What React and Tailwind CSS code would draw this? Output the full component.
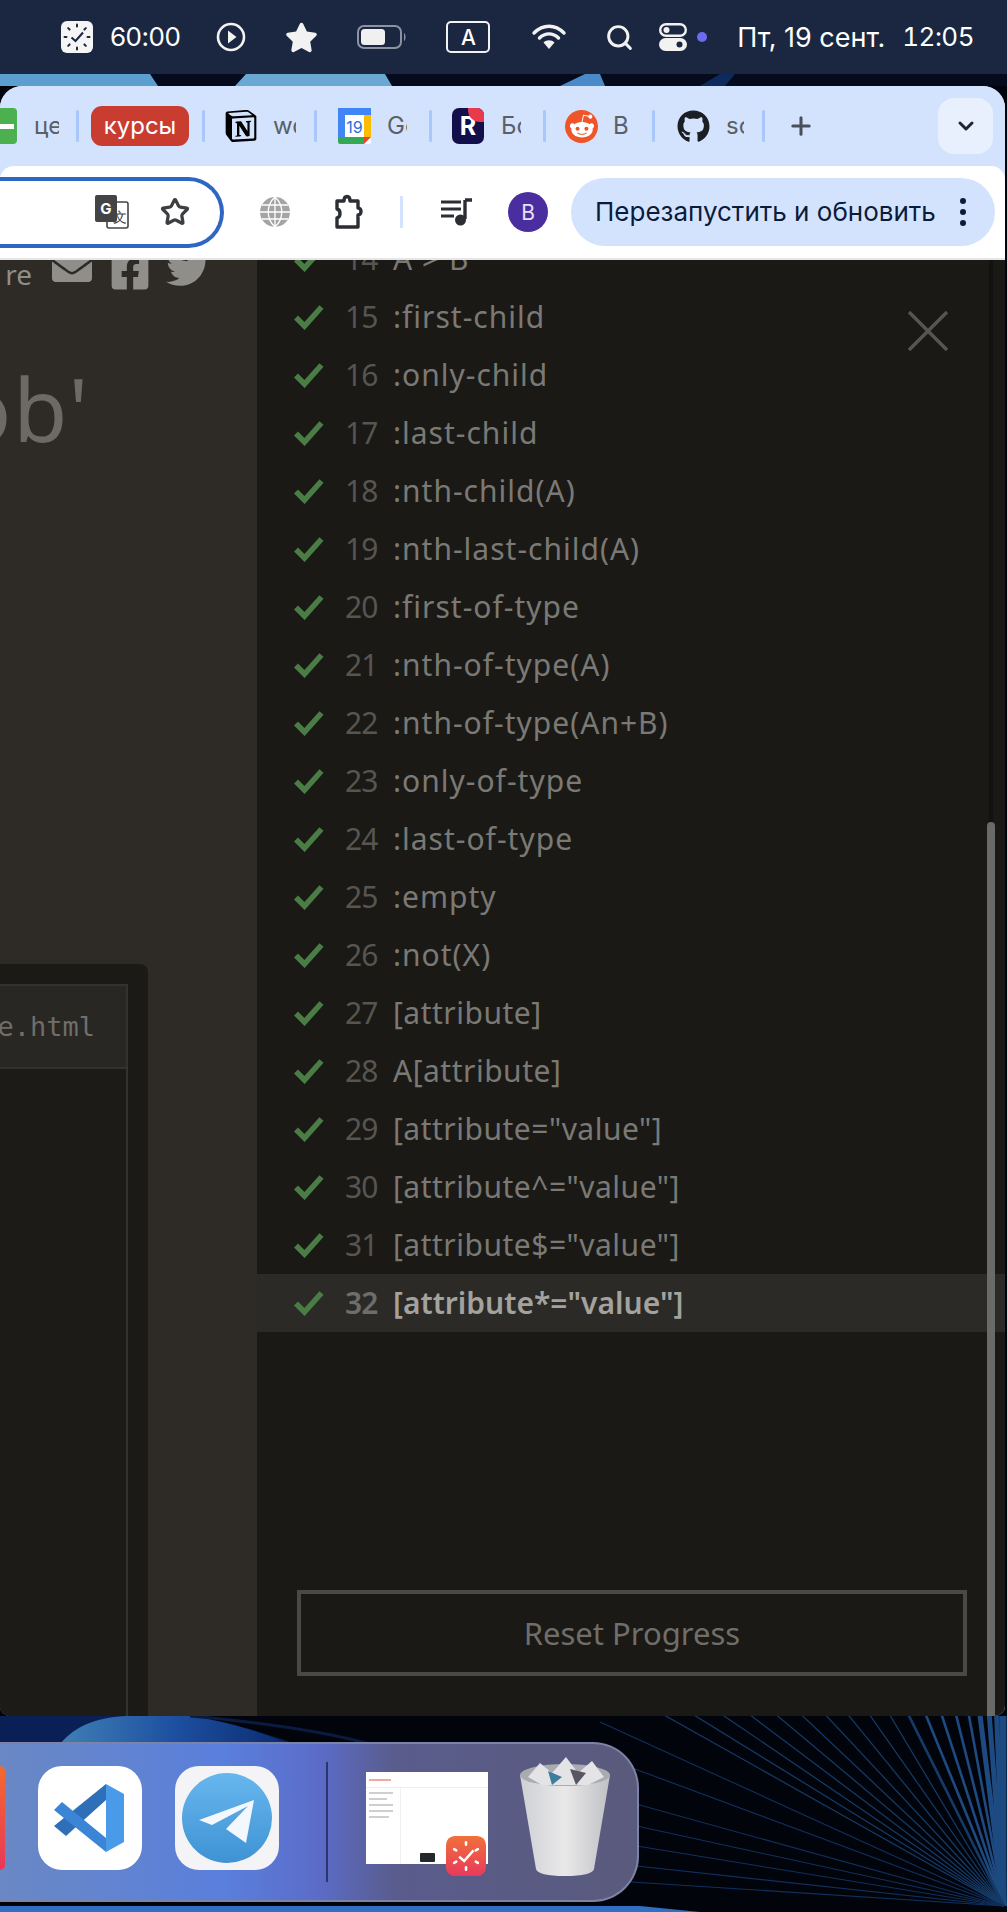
import React from 'react';
import { FaGithub, FaRedditAlien, FaTwitter, FaFacebookSquare, FaEnvelope, FaStar } from 'react-icons/fa';
import { SiNotion } from 'react-icons/si';
import { Plus, ChevronDown, Star, Search } from 'lucide-react';

const levels = [
  [14, 'A > B'],
  [15, ':first-child'],
  [16, ':only-child'],
  [17, ':last-child'],
  [18, ':nth-child(A)'],
  [19, ':nth-last-child(A)'],
  [20, ':first-of-type'],
  [21, ':nth-of-type(A)'],
  [22, ':nth-of-type(An+B)'],
  [23, ':only-of-type'],
  [24, ':last-of-type'],
  [25, ':empty'],
  [26, ':not(X)'],
  [27, '[attribute]'],
  [28, 'A[attribute]'],
  [29, '[attribute="value"]'],
  [30, '[attribute^="value"]'],
  [31, '[attribute$="value"]'],
  [32, '[attribute*="value"]'],
];

const Sep = () => <div className="w-[3px] h-[32px] rounded-full bg-[#a8c7fa] shrink-0" />;

const Check = () => (
  <svg width="30" height="26" viewBox="0 0 30 26" className="shrink-0">
    <path d="M2 13.5 L10.5 22 L27.5 3" fill="none" stroke="#4a7d45" strokeWidth="5.6" />
  </svg>
);

const LevelRow = ({ num, name, active }) => {
  const tracking = active ? 'tracking-[0px]' : name.includes('[') ? 'tracking-[0.5px]' : 'tracking-[1px]';
  return (
    <div className={`flex items-center h-[58px] pl-[37px] ${active ? 'bg-[#2b2a27]' : ''}`}>
      <Check />
      <span className={`w-[48px] ml-[21px] text-[30px] leading-none tracking-[-1px] ${active ? 'font-semibold text-[#6e6d69]' : 'text-[#565552]'}`}>{num}</span>
      <span className={`text-[30px] leading-none ${tracking} ${active ? 'font-semibold text-[#a3a29e]' : 'text-[#7a7975]'}`}>{name}</span>
    </div>
  );
};

const ClockApp = ({ size }) => (
  <svg width={size} height={size} viewBox="0 0 32 32">
    <defs>
      <linearGradient id="clockapp" x1="0" y1="0" x2="0" y2="1">
        <stop offset="0" stopColor="#f0703a" />
        <stop offset="1" stopColor="#e83a5c" />
      </linearGradient>
    </defs>
    <rect width="32" height="32" rx="7" fill="url(#clockapp)" />
    {[0, 60, 120, 180, 240, 300].map((a) => (
      <rect key={a} x="15" y="4" width="2" height="4" rx="1" fill="#fff" transform={`rotate(${a} 16 16)`} />
    ))}
    <path d="M10.5 16.5 L14.5 20 L22 11.5" fill="none" stroke="#fff" strokeWidth="2" />
  </svg>
);

const MenuBar = () => (
  <div className="h-[74px] bg-[#1b2740] text-white relative shrink-0 font-['Inter',sans-serif]">
    <div className="flex items-center h-full pl-[61px]">
      <svg width="32" height="32" viewBox="0 0 32 32">
        <rect width="32" height="32" rx="6" fill="#f5f5f5" />
        {[0, 45, 90, 135, 180, 225, 270, 315].map((a) => (
          <rect key={a} x="15" y="2.5" width="2" height="4" rx="1" fill="#1b2740" transform={`rotate(${a} 16 16)`} />
        ))}
        <path d="M10.5 16.5 L14.5 20 L22 11.5" fill="none" stroke="#1b2740" strokeWidth="2" />
      </svg>
      <span className="ml-[17px] text-[26px] tracking-[-0.5px] leading-none">60:00</span>
      <svg width="30" height="30" viewBox="0 0 30 30" className="ml-[36px]">
        <circle cx="15" cy="15" r="13" fill="none" stroke="#f2f2f2" strokeWidth="2.6" />
        <path d="M12 8.5 L20.5 15 L12 21.5 Z" fill="#f2f2f2" />
      </svg>
      <FaStar size={33} className="ml-[39px] text-[#f2f2f2]" />
      <svg width="50" height="24" viewBox="0 0 50 24" className="ml-[39px]">
        <rect x="1" y="1" width="43" height="22" rx="6" fill="none" stroke="#8b93a3" strokeWidth="2" />
        <rect x="4" y="4" width="24" height="16" rx="3.5" fill="#f0f0f0" />
        <path d="M47 8 C49 9 49 15 47 16 Z" fill="#8b93a3" />
      </svg>
      <div className="ml-[39px] w-[44px] h-[32px] rounded-[5px] border-2 border-[#f2f2f2] flex items-center justify-center text-[21px] font-medium leading-none">A</div>
      <svg width="36" height="26" viewBox="0 0 36 26" className="ml-[41px]">
        <path d="M3 9 C12 0 24 0 33 9 M8.5 14 C14 8.5 22 8.5 27.5 14" fill="none" stroke="#f2f2f2" strokeWidth="3.4" strokeLinecap="round" />
        <path d="M12.5 18.5 C15.5 15.5 20.5 15.5 23.5 18.5 L18 25 Z" fill="#f2f2f2" />
      </svg>
      <Search size={29} strokeWidth={2.4} className="ml-[38px] text-[#f2f2f2]" />
      <svg width="28" height="28" viewBox="0 0 28 28" className="ml-[25px]">
        <rect x="1.2" y="1.2" width="25.6" height="11.6" rx="5.8" fill="none" stroke="#f2f2f2" strokeWidth="2.4" />
        <circle cx="7.5" cy="7" r="3" fill="#f2f2f2" />
        <rect y="15" width="28" height="13" rx="6.5" fill="#f2f2f2" />
        <circle cx="20.5" cy="21.5" r="3" fill="#1b2740" />
      </svg>
      <div className="ml-[10px] w-[10px] h-[10px] rounded-full bg-[#6c6cf0]" />
      <span className="ml-[30px] text-[27px] leading-none whitespace-nowrap">Пт, 19 сент.</span>
      <span className="ml-[17px] text-[26px] tracking-[-0.5px] leading-none tabular-nums">12:05</span>
    </div>
  </div>
);

const WallStrip = () => (
  <div className="h-[12px] bg-[#050a1c] shrink-0">
    <svg width="1007" height="12" viewBox="0 0 1007 12" className="block">
      <path d="M0 12 L0 0 L150 0 L158 12 Z" fill="#5c9ed0" />
      <path d="M235 12 L246 0 L385 0 L392 12 Z" fill="#6aa8d4" />
      <path d="M560 12 L585 0 L600 0 L605 12 Z" fill="#4b8ac8" />
      <path d="M700 12 L720 0 L735 0 L725 12 Z" fill="#0e2a5c" />
    </svg>
  </div>
);

const TabStrip = () => (
  <div className="h-[80px] bg-[#d3e3fd] flex items-center shrink-0 pr-[12px] font-['Inter',sans-serif]">
    <div className="w-[17px] h-[36px] bg-[#4caf50] rounded-r-[4px] flex items-center shrink-0">
      <div className="w-[14px] h-[5px] bg-white" />
    </div>
    <span className="ml-[17px] w-[25px] overflow-hidden text-[24px] leading-none text-[#5a6068] whitespace-nowrap">це</span>
    <div className="ml-[17px]"><Sep /></div>
    <div className="ml-[12px] w-[98px] h-[40px] rounded-[11px] bg-[#c93d30] text-white text-[24px] leading-none flex items-center justify-center">курсы</div>
    <div className="ml-[13px]"><Sep /></div>
    <div className="ml-[20px] w-[32px] h-[36px] flex items-center justify-center text-black"><SiNotion size={32} /></div>
    <span className="ml-[16px] w-[23px] overflow-hidden text-[24px] leading-none text-[#5a6068]">wo</span>
    <div className="ml-[18px]"><Sep /></div>
    <svg width="33" height="36" viewBox="0 0 33 36" className="ml-[21px]">
      <rect width="33" height="36" rx="2" fill="#fff" />
      <path d="M0 0 H33 V7 H0 Z" fill="#4285f4" />
      <path d="M0 0 H7 V29 H0 Z" fill="#4285f4" />
      <path d="M26 7 H33 V29 H26 Z" fill="#fbbc04" />
      <path d="M0 29 H26 V36 H2 Q0 36 0 34 Z" fill="#34a853" />
      <path d="M26 29 H33 L26 36 Z" fill="#ea4335" />
      <text x="16.5" y="25" textAnchor="middle" fontSize="16" fontFamily="Inter, sans-serif" fill="#2a6fdb">19</text>
    </svg>
    <span className="ml-[16px] w-[20px] overflow-hidden text-[24px] leading-none text-[#5a6068]">Go</span>
    <div className="ml-[22px]"><Sep /></div>
    <div className="ml-[20px] w-[32px] h-[36px] rounded-[7px] bg-[#120f4a] relative overflow-hidden flex items-center justify-center text-white font-bold text-[25px] leading-none shrink-0">
      R
      <div className="absolute top-0 right-0 w-[16px] h-[14px] bg-[#e8394d] rounded-bl-[12px]" />
    </div>
    <span className="ml-[17px] w-[20px] overflow-hidden text-[24px] leading-none text-[#5a6068]">Бо</span>
    <div className="ml-[22px]"><Sep /></div>
    <div className="ml-[19px] w-[33px] h-[33px] rounded-full bg-[#f0552a] flex items-center justify-center text-white shrink-0"><FaRedditAlien size={26} /></div>
    <span className="ml-[15px] w-[15px] text-[24px] leading-none text-[#5a6068]">В</span>
    <div className="ml-[24px]"><Sep /></div>
    <FaGithub size={33} className="ml-[22px] text-[#1b1f23] shrink-0" />
    <span className="ml-[16px] w-[18px] overflow-hidden text-[24px] leading-none text-[#5a6068]">so</span>
    <div className="ml-[18px]"><Sep /></div>
    <Plus size={28} strokeWidth={2.6} className="ml-[22px] text-[#4a5058]" />
    <div className="ml-auto w-[55px] h-[56px] rounded-[16px] bg-[#e9f0fd] flex items-center justify-center">
      <ChevronDown size={24} strokeWidth={3} className="text-[#1f2430]" />
    </div>
  </div>
);

const Toolbar = () => (
  <div className="h-[94px] bg-white flex items-center shrink-0 rounded-t-[14px] border-b-2 border-[#e6e6e6] pr-[11px] font-['Inter',sans-serif]">
    <div className="w-[224px] h-[71px] border-[4px] border-l-0 border-[#2f66c4] rounded-r-[36px] flex items-center justify-end pr-[30px] shrink-0">
      <svg width="34" height="34" viewBox="0 0 34 34">
        <rect x="12" y="7" width="21" height="26" rx="2" fill="#fff" stroke="#444" strokeWidth="1.6" />
        <rect x="0" y="0" width="22" height="27" rx="2" fill="#444" />
        <text x="11" y="19" textAnchor="middle" fontSize="15" fontWeight="700" fontFamily="Inter, sans-serif" fill="#fff">G</text>
        <text x="25" y="27" textAnchor="middle" fontSize="14" fontFamily="Inter, sans-serif" fill="#444">文</text>
      </svg>
      <Star size={30} strokeWidth={2.6} className="ml-[31px] text-[#3c4043]" />
    </div>
    <svg width="32" height="32" viewBox="0 0 32 32" className="ml-[35px] shrink-0">
      <circle cx="16" cy="16" r="15" fill="#a4a4a4" />
      <path d="M1 16 H31 M3 9 H29 M3 23 H29 M16 1 V31 M16 1 C7 9 7 23 16 31 M16 1 C25 9 25 23 16 31" fill="none" stroke="#fff" strokeWidth="1.3" />
    </svg>
    <svg width="34" height="36" viewBox="0 0 34 36" className="ml-[41px] shrink-0">
      <path d="M5 7 H12 C12 1 18 1 18 7 H26 V14 C30 14 30 21 26 21 V33 H5 V24 C9 23 9 16 5 15 Z" fill="none" stroke="#2b2e33" strokeWidth="3.4" strokeLinejoin="round" />
    </svg>
    <div className="ml-[34px] w-[3px] h-[32px] bg-[#d3e3fd] shrink-0" />
    <svg width="32" height="30" viewBox="0 0 32 30" className="ml-[38px] shrink-0">
      <path d="M0 5 H20 M0 12 H20 M0 19 H13" stroke="#2b2e33" strokeWidth="3" />
      <path d="M24 3 V22" stroke="#2b2e33" strokeWidth="3.4" />
      <path d="M24 3 H31" stroke="#2b2e33" strokeWidth="3.4" />
      <circle cx="19.5" cy="23" r="5.5" fill="#2b2e33" />
    </svg>
    <div className="ml-[35px] w-[40px] h-[40px] rounded-full bg-[#4a2ea0] text-[#e6e0f8] text-[21px] leading-none flex items-center justify-center shrink-0">В</div>
    <div className="ml-[23px] w-[424px] h-[68px] rounded-[34px] bg-[#d3e3fd] flex items-center pl-[24px] pr-[29px] text-[#0b1b3a] shrink-0">
      <span className="text-[26px] leading-none whitespace-nowrap">Перезапустить и обновить</span>
      <div className="ml-auto flex flex-col gap-[5px]">
        <div className="w-[6px] h-[6px] rounded-full bg-[#0b1b3a]" />
        <div className="w-[6px] h-[6px] rounded-full bg-[#0b1b3a]" />
        <div className="w-[6px] h-[6px] rounded-full bg-[#0b1b3a]" />
      </div>
    </div>
  </div>
);

const LeftPane = () => (
  <div className="w-[257px] bg-[#2e2b26] flex flex-col shrink-0 overflow-hidden">
    <div className="flex items-start h-[32px] overflow-hidden">
      <span className="ml-[-24px] mt-[-4px] w-[56px] text-right text-[28px] leading-[36px] text-[#8f8e8a] font-['Noto_Sans',sans-serif]">re</span>
      <FaEnvelope size={40} className="ml-[20px] mt-[-13px] text-[#8f8e8a]" />
      <FaFacebookSquare size={42} className="ml-[17px] mt-[-10px] text-[#8f8e8a]" />
      <FaTwitter size={44} className="ml-[15px] mt-[-14px] text-[#8f8e8a]" />
    </div>
    <div className="mt-[56px] h-[120px] overflow-hidden">
      <div className="ml-[-42px] text-[88px] leading-[120px] tracking-[2px] text-[#6b6a66] font-['Noto_Sans',sans-serif] whitespace-nowrap">ob'</div>
    </div>
    <div className="mt-[496px] w-[148px] flex-1 bg-[#1b1a17] rounded-tr-[8px] pt-[20px] pr-[20px] flex flex-col">
      <div className="h-[85px] bg-[#282723] border-t-[2px] border-r-[2px] border-b-[2px] border-[#33322e] flex items-center justify-end pr-[31px] overflow-hidden">
        <span className="text-[27px] leading-none text-[#6f6e6a] font-['DejaVu_Sans_Mono',monospace] whitespace-nowrap">e.html</span>
      </div>
      <div className="flex-1 border-r-[2px] border-[#33322e] bg-[#1c1b18]" />
    </div>
  </div>
);

const Sidebar = () => (
  <div className="flex-1 bg-[#1a1915] relative flex flex-col overflow-hidden font-['Noto_Sans',sans-serif]">
    <div className="-mt-[30px]">
      {levels.map(([num, name]) => (
        <LevelRow key={num} num={num} name={name} active={num === 32} />
      ))}
    </div>
    <div className="mt-auto mb-[40px] ml-[40px] w-[670px] h-[86px] border-[4px] border-[#4a4945] flex items-center justify-center text-[31px] leading-none text-[#6f6e6a]">
      Reset Progress
    </div>
    <svg width="42" height="42" viewBox="0 0 42 42" className="absolute left-[650px] top-[50px]">
      <path d="M2 2 L40 40 M40 2 L2 40" stroke="#565552" strokeWidth="3.4" />
    </svg>
    <div className="absolute left-[732px] top-0 w-[4px] h-[562px] bg-[#121210]" />
    <div className="absolute left-[730px] top-[562px] bottom-0 w-[8px] rounded-t-full bg-[#6a6a68]" />
  </div>
);

// fan of wallpaper rays, all from one point near the lower right corner
const topRays = Array.from({ length: 20 }, (_, i) => 1004 - 340 * Math.pow(i / 19, 1.7));
const sideRays = [6, 40, 78, 102, 124, 146, 164];

const Desktop = () => (
  <div className="flex-1 relative overflow-hidden">
    <svg width="1007" height="196" viewBox="0 0 1007 196" className="absolute inset-0">
      <defs>
        <linearGradient id="blob" x1="0" y1="0" x2="1" y2="0">
          <stop offset="0" stopColor="#3f7fb5" />
          <stop offset="0.5" stopColor="#1d4fa0" />
          <stop offset="1" stopColor="#0a2a6e" />
        </linearGradient>
      </defs>
      <rect width="1007" height="196" fill="#02040c" />
      <path d="M0 0 H190 C230 6 260 16 290 26 H0 Z" fill="#0a1f55" />
      <path d="M60 28 C75 10 95 2 125 0 H190 C230 6 260 16 290 28 Z" fill="url(#blob)" />
      <path d="M190 0 C280 8 340 20 370 28" fill="none" stroke="#0b1b40" strokeWidth="3" />
      <path d="M0 190 H640 L700 196 H0 Z" fill="#2f6fc4" />
      {topRays.map((x, i) => (
        <line key={x} x1="1004" y1="190" x2={x} y2="-1" stroke={i < 9 ? '#1d4a80' : '#153c68'} strokeWidth={i < 5 ? 5 : i < 10 ? 2.6 : 1.2} />
      ))}
      {sideRays.map((y) => (
        <line key={y} x1="1004" y1="190" x2="600" y2={y} stroke="#10305c" strokeWidth="1.1" />
      ))}
    </svg>
    <div className="relative mt-[26px] w-[639px] h-[160px] rounded-r-[46px] border-[2px] border-l-0 border-[#7d83a6] bg-[linear-gradient(90deg,#6a88c4_0%,#5a7fdc_35%,#5b6cc8_50%,#595c8c_62%,#5a5a7c_100%)] flex items-center">
      <div className="w-[5px] h-[104px] -mt-[8px] rounded-r-[6px] bg-[linear-gradient(180deg,#f26a2e,#e9385a)] shrink-0" />
      <div className="ml-[33px] w-[104px] h-[104px] -mt-[8px] rounded-[24px] bg-white flex items-center justify-center shrink-0">
        <svg width="76" height="76" viewBox="0 0 76 76">
          <path d="M2 46 L14 56 L54 20 L54 4 Z" fill="#2f6fb8" />
          <path d="M2 30 L10 22 L54 58 L54 72 Z" fill="#3a85d6" />
          <path d="M54 4 L72 14 V62 L54 72 Z" fill="#4a9aea" />
        </svg>
      </div>
      <div className="ml-[33px] w-[104px] h-[104px] -mt-[8px] rounded-[24px] bg-[#f4f4f6] flex items-center justify-center shrink-0">
        <svg width="90" height="90" viewBox="0 0 90 90">
          <defs>
            <linearGradient id="tg" x1="0" y1="0" x2="0" y2="1">
              <stop offset="0" stopColor="#67b6ee" />
              <stop offset="1" stopColor="#3f93d3" />
            </linearGradient>
          </defs>
          <circle cx="45" cy="45" r="45" fill="url(#tg)" />
          <path d="M17 47 L72 27 L64 70 L44 56 L66 33 L30 52 Z" fill="#f2f8fd" />
        </svg>
      </div>
      <div className="ml-[47px] w-[2px] h-[120px] bg-[#2a3570] shrink-0" />
      <div className="ml-[38px] w-[122px] h-[92px] bg-white relative shrink-0 -mt-[8px]">
        <div className="h-[16px] border-b border-[#eee] flex items-center pl-[3px]">
          <div className="w-[22px] h-[2px] bg-[#f0a9a0]" />
        </div>
        <div className="absolute left-0 top-[16px] bottom-0 w-[35px] border-r border-[#f0f0f0] flex flex-col gap-[4px] pt-[4px] pl-[3px]">
          <div className="w-[24px] h-[2px] bg-[#cfcfcf]" />
          <div className="w-[18px] h-[2px] bg-[#cfcfcf]" />
          <div className="w-[24px] h-[2px] bg-[#cfcfcf]" />
          <div className="w-[24px] h-[2px] bg-[#cfcfcf]" />
          <div className="w-[20px] h-[2px] bg-[#cfcfcf]" />
        </div>
        <div className="absolute left-[54px] bottom-[2px] w-[15px] h-[9px] rounded-[1px] bg-[#22282c]" />
        <div className="absolute right-[2px] bottom-[-12px]">
          <ClockApp size={40} />
        </div>
      </div>
      <svg width="94" height="122" viewBox="0 0 94 122" className="ml-[30px] -mt-[12px] shrink-0">
        <defs>
          <linearGradient id="bin" x1="0" y1="0" x2="1" y2="0">
            <stop offset="0" stopColor="#cfd0d4" />
            <stop offset="0.5" stopColor="#e9e9ea" />
            <stop offset="1" stopColor="#bfc0c5" />
          </linearGradient>
        </defs>
        <path d="M2 20 L18 114 Q20 121 47 121 Q74 121 76 114 L92 20 Z" fill="url(#bin)" />
        <ellipse cx="47" cy="20" rx="45" ry="11" fill="#a9abb0" />
        <path d="M10 22 L22 8 L34 18 L48 2 L60 18 L74 6 L86 22 L70 30 L24 30 Z" fill="#e4e4e6" />
        <path d="M30 16 L44 22 L34 30 Z" fill="#3e7d9e" />
        <path d="M52 14 L68 18 L58 30 Z" fill="#5a5560" />
      </svg>
    </div>
  </div>
);

export default function App() {
  return (
    <div className="w-[1007px] h-[1912px] flex flex-col overflow-hidden bg-[#02040c]">
      <MenuBar />
      <WallStrip />
      <div className="h-[1630px] w-[1005px] rounded-t-[22px] rounded-b-[10px] overflow-hidden flex flex-col shrink-0 bg-[#d3e3fd]">
        <TabStrip />
        <Toolbar />
        <div className="flex-1 flex min-h-0">
          <LeftPane />
          <Sidebar />
        </div>
      </div>
      <Desktop />
    </div>
  );
}
